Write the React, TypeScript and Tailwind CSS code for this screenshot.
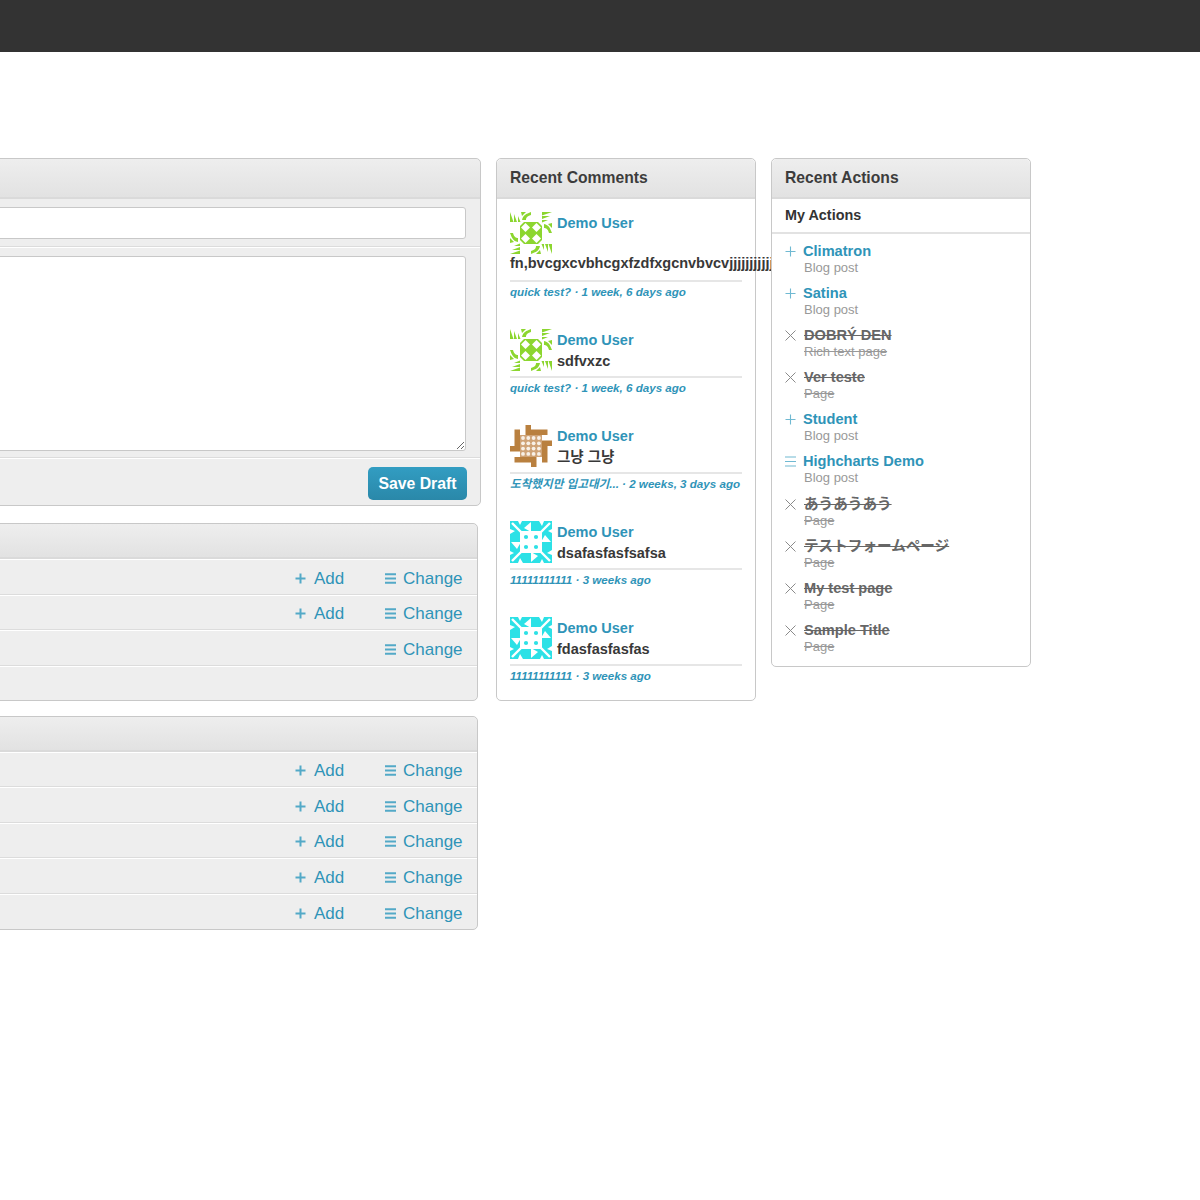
import React from "react";

const SANS = "font-['Liberation_Sans','Noto_Sans_CJK_KR','Noto_Sans_CJK_JP',sans-serif]";

function Quads({ children }: { children: React.ReactNode }) {
  return (
    <>
      {[0, 90, 180, 270].map((r) => (
        <g key={r} transform={`rotate(${r} 21 21)`}>
          {children}
        </g>
      ))}
    </>
  );
}

function GreenAvatar() {
  return (
    <svg width="42" height="42" viewBox="0 0 42 42" className="float-left mr-[5px] blur-[0.3px]">
      <rect x="10" y="10" width="22" height="22" fill="#8cd62f" />
      <Quads>
        <g fill="#8cd62f">
          <path d="M0 0L3.5 10H0ZM4 2L7 10H4ZM8 4L10.5 10H8Z" />
          <path d="M12 8C13 3 16 2 21 0V3C17 4 16 6 16 8Z" />
          <path d="M11 0H16L12 4Z" />
        </g>
        <path d="M15.5 11L20 15.5L15.5 20L11 15.5Z" fill="#fff" />
        <path d="M10 10L14 10L10 14Z" fill="#fff" />
      </Quads>
    </svg>
  );
}

function BrownAvatar() {
  return (
    <svg width="42" height="42" viewBox="0 0 42 42" className="float-left mr-[5px] blur-[0.3px]">
      <rect x="10" y="10" width="22" height="22" fill="#cfa377" />
      {[0, 1, 2, 3].flatMap((a) =>
        [0, 1, 2, 3].map((b) => (
          <circle key={`${a}${b}`} cx={13 + a * 5.3} cy={13 + b * 5.3} r="1.9" fill="#f8f1e8" />
        ))
      )}
      <Quads>
        <path d="M15.5 0H21V4.5H37.5V10H15.5Z" fill="#b9803f" />
      </Quads>
    </svg>
  );
}

function CyanAvatar() {
  return (
    <svg width="42" height="42" viewBox="0 0 42 42" className="float-left mr-[5px] blur-[0.3px]">
      <rect width="42" height="42" fill="#2ce1e6" />
      <rect x="10" y="10" width="22" height="22" fill="#fff" />
      <Quads>
        <path d="M2 2L11 11" stroke="#fff" strokeWidth="2.4" />
        <path d="M21 1L14 7L21 11Z" fill="#fff" />
        <path d="M8 0L12 0L10 4Z" fill="#fff" />
        <path d="M0 8L5 10L0 13Z" fill="#fff" />
        <circle cx="16" cy="16" r="2.1" fill="#2ce1e6" />
      </Quads>
    </svg>
  );
}

function PlusIcon({ thick = false }: { thick?: boolean }) {
  return thick ? (
    <svg width="11" height="11" viewBox="0 0 11 11" className="shrink-0">
      <path d="M5.5 0.5V10.5M0.5 5.5H10.5" stroke="#53a9c7" strokeWidth="2" />
    </svg>
  ) : (
    <svg width="11" height="11" viewBox="0 0 11 11" className="shrink-0">
      <path d="M5.5 0.5V10.5M0.5 5.5H10.5" stroke="#70b9d2" strokeWidth="1.1" />
    </svg>
  );
}

function ListIcon({ thick = false }: { thick?: boolean }) {
  return thick ? (
    <svg width="11" height="11" viewBox="0 0 11 11" className="shrink-0">
      <path d="M0 1.3H11M0 5.5H11M0 9.7H11" stroke="#53a9c7" strokeWidth="1.9" />
    </svg>
  ) : (
    <svg width="11" height="11" viewBox="0 0 11 11" className="shrink-0">
      <path d="M0 1H11M0 5.5H11M0 10H11" stroke="#70b9d2" strokeWidth="1.1" />
    </svg>
  );
}

function XIcon() {
  return (
    <svg width="11" height="11" viewBox="0 0 11 11" className="shrink-0">
      <path d="M0.5 0.5L10.5 10.5M10.5 0.5L0.5 10.5" stroke="#8a8a8a" strokeWidth="1" />
    </svg>
  );
}

function PanelHead({ title, h = "h-[40px]" }: { title?: string; h?: string }) {
  return (
    <div
      className={`${h} shrink-0 flex items-center px-[13px] bg-gradient-to-b from-[#eeeeee] to-[#e2e2e2] border-b-2 border-[#dadada] rounded-t-[5px] text-[15.7px] font-bold text-[#3c3c3c]`}
    >
      {title}
    </div>
  );
}

function ModelRow({ add, last }: { add: boolean; last?: boolean }) {
  return (
    <div
      className={`h-[35.5px] flex items-center justify-end pr-[14px] pt-[3px] border-t border-white text-[17px] text-[#2f94b8] ${
        last ? "" : "border-b border-b-[#dcdcdc]"
      }`}
    >
      <div className="w-[49px] flex items-center gap-[8px]">
        {add && (
          <>
            <PlusIcon thick />
            <span>Add</span>
          </>
        )}
      </div>
      <div className="w-[78px] ml-[41px] flex items-center gap-[7px]">
        <ListIcon thick />
        <span>Change</span>
      </div>
    </div>
  );
}

const comments = [
  { avatar: <GreenAvatar />, text: "fn,bvcgxcvbhcgxfzdfxgcnvbvcvjjjjjjjjjjjjjjjjj", meta: "quick test?", when: "1 week, 6 days ago", h: "h-[70px]" },
  { avatar: <GreenAvatar />, text: "sdfvxzc", meta: "quick test?", when: "1 week, 6 days ago", h: "h-[49px]" },
  { avatar: <BrownAvatar />, text: "그냥 그냥", meta: "도착했지만 입고대기...", when: "2 weeks, 3 days ago", h: "h-[49px]" },
  { avatar: <CyanAvatar />, text: "dsafasfasfsafsa", meta: "11111111111", when: "3 weeks ago", h: "h-[49px]" },
  { avatar: <CyanAvatar />, text: "fdasfasfasfas", meta: "11111111111", when: "3 weeks ago", h: "h-[49px]" },
];

const actions = [
  { kind: "add", name: "Climatron", sub: "Blog post" },
  { kind: "add", name: "Satina", sub: "Blog post" },
  { kind: "del", name: "DOBRÝ DEN", sub: "Rich text page" },
  { kind: "del", name: "Ver teste", sub: "Page" },
  { kind: "add", name: "Student", sub: "Blog post" },
  { kind: "chg", name: "Highcharts Demo", sub: "Blog post" },
  { kind: "del", name: "あうあうあう", sub: "Page" },
  { kind: "del", name: "テストフォームページ", sub: "Page" },
  { kind: "del", name: "My test page", sub: "Page" },
  { kind: "del", name: "Sample Title", sub: "Page" },
];

export default function App() {
  return (
    <div className={`${SANS} w-[1200px] h-[1200px] overflow-hidden bg-white`}>
      <div className="h-[52px] bg-[#333333]" />
      <div className="flex items-start pt-[106px] ml-[-20px]">
        {/* left column */}
        <div className="w-[501px] shrink-0 flex flex-col">
          <div className="h-[348px] flex flex-col border border-[#c8c8c8] rounded-[5px] bg-[#eeeeee]">
            <PanelHead />
            <div className="h-[48px] shrink-0 pt-[8px] pl-[10px] pr-[14px] border-b border-[#dcdcdc]">
              <input className="block w-full h-[32px] bg-white border border-[#c8c8c8] rounded-[3px] outline-none" />
            </div>
            <div className="h-[211px] shrink-0 pt-[8px] pl-[10px] pr-[14px] border-t border-b border-t-white border-b-[#dcdcdc]">
              <textarea className="block w-full h-[195px] bg-white border border-[#c8c8c8] rounded-[3px] outline-none" />
            </div>
            <div className="flex-1 flex justify-end items-start pt-[8px] pr-[13px] border-t border-white">
              <button className="w-[99px] h-[33px] rounded-[5px] bg-gradient-to-b from-[#329dc2] to-[#2a88a9] text-white font-bold text-[15.8px]">
                Save Draft
              </button>
            </div>
          </div>

          <div className="w-[498px] mt-[17px] border border-[#c8c8c8] rounded-[5px] bg-[#eeeeee]">
            <PanelHead h="h-[35px]" />
            <ModelRow add />
            <ModelRow add />
            <ModelRow add={false} />
            <div className="h-[34px] border-t border-white" />
          </div>

          <div className="w-[498px] mt-[15px] border border-[#c8c8c8] rounded-[5px] bg-[#eeeeee]">
            <PanelHead h="h-[35px]" />
            <ModelRow add />
            <ModelRow add />
            <ModelRow add />
            <ModelRow add />
            <ModelRow add last />
          </div>
        </div>

        {/* recent comments */}
        <div className="w-[260px] h-[543px] ml-[15px] shrink-0 border border-[#c8c8c8] rounded-[5px] bg-white">
          <PanelHead title="Recent Comments" />
          <div className="pl-[13px] pr-[13px] pt-[13px]">
            {comments.map((c, i) => (
              <div key={i} className={i === 0 ? "h-[117px]" : "h-[96px]"}>
                <div className={`${c.h} border-b-2 border-[#e6e6e6]`}>
                  {c.avatar}
                  <div className="pt-[2px] text-[14.5px] leading-[18px] font-bold text-[#2f94b8]">Demo User</div>
                  <div className="mt-[3px] text-[14.5px] leading-[18px] font-bold text-[#383838]">{c.text}</div>
                </div>
                <div className="mt-[1px] text-[11.6px] leading-[18px] italic font-bold text-[#2f94b8] whitespace-nowrap">
                  {c.meta} · {c.when}
                </div>
              </div>
            ))}
          </div>
        </div>

        {/* recent actions */}
        <div className="w-[260px] h-[509px] ml-[15px] shrink-0 border border-[#c8c8c8] rounded-[5px] bg-white">
          <PanelHead title="Recent Actions" />
          <div className="h-[35px] flex items-center px-[13px] border-b-2 border-[#e2e2e2] text-[14.4px] font-bold text-[#333333]">
            My Actions
          </div>
          <div className="pl-[13px] pt-[9px]">
            {actions.map((a, i) => (
              <div key={i} className="h-[42.1px] flex gap-[7px]">
                <div className="pt-[3px]">
                  {a.kind === "add" ? <PlusIcon /> : a.kind === "chg" ? <ListIcon /> : <XIcon />}
                </div>
                <div className="min-w-0">
                  {a.kind === "del" ? (
                    <>
                      <div className="ml-[1px] text-[14.6px] leading-[17px] font-bold text-[#666666] line-through whitespace-nowrap">
                        {a.name}
                      </div>
                      <div className="ml-[1px] text-[13px] leading-[16px] text-[#999999] line-through whitespace-nowrap">
                        {a.sub}
                      </div>
                    </>
                  ) : (
                    <>
                      <div className="text-[14.6px] leading-[17px] font-bold text-[#2f94b8] whitespace-nowrap">{a.name}</div>
                      <div className="ml-[1px] text-[13px] leading-[16px] text-[#999999] whitespace-nowrap">{a.sub}</div>
                    </>
                  )}
                </div>
              </div>
            ))}
          </div>
        </div>
      </div>
    </div>
  );
}
